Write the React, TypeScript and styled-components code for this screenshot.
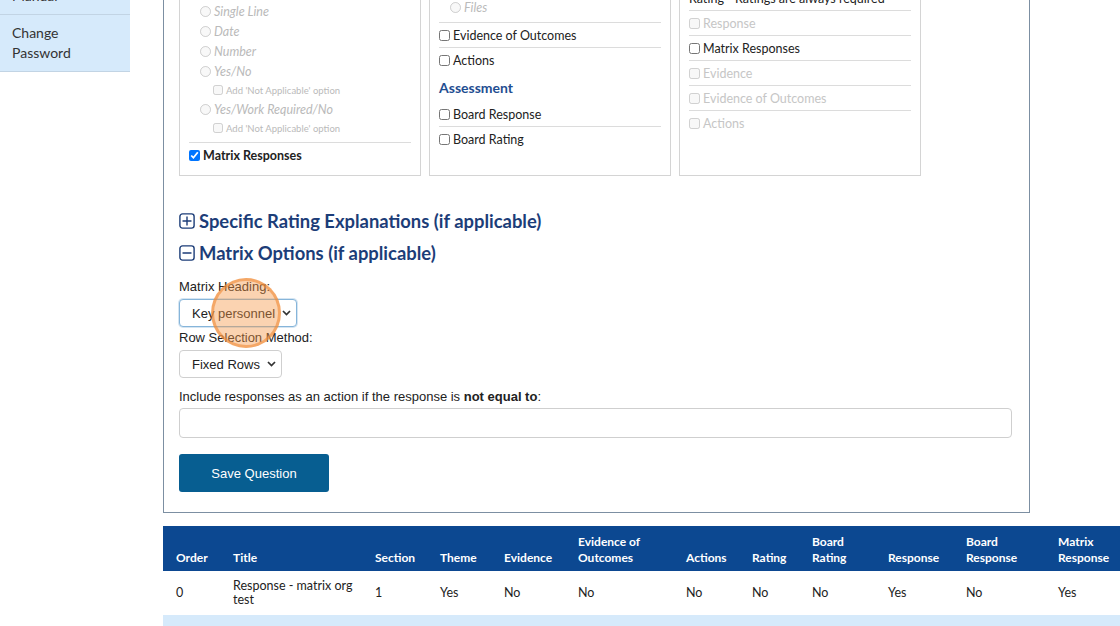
import React from 'react';
import styled, { createGlobalStyle } from 'styled-components';

const GlobalStyle = createGlobalStyle`
  * { box-sizing: border-box; }
  html, body { margin: 0; padding: 0; background: #ffffff; }
  body {
    font-family: Lato, "Noto Sans", sans-serif;
    color: #222;
    overflow: hidden;
  }
`;

const Viewport = styled.div`
  width: 1120px;
  height: 626px;
  overflow: hidden;
`;

/* the page is shown scrolled down by 100px */
const Scrolled = styled.div`
  display: flex;
  align-items: flex-start;
  margin-top: -100px;
`;

const Sidebar = styled.nav`
  width: 130px;
  flex: none;
  margin-top: 4px;
  display: flex;
  flex-direction: column;
`;

const NavLink = styled.a`
  display: block;
  background: #d6eafb;
  border-bottom: 1px solid #c2d4e4;
  padding: 8px 30px 8px 12px;
  font-size: 14px;
  line-height: 20px;
  color: #333;
  text-decoration: none;
`;

const Main = styled.main`
  flex: 1;
  min-width: 0;
  margin-top: 33px;
  padding-left: 33px;
  display: flex;
  flex-direction: column;
  gap: 13px;
`;

const QuestionPanel = styled.section`
  width: 867px;
  border: 1px solid #7c8fa2;
  padding: 15px 17px 20px 15px;
  display: flex;
  flex-direction: column;
`;

const OptionGrid = styled.div`
  display: grid;
  grid-template-columns: repeat(3, 242px);
  gap: 8px;
`;

const OptionPanel = styled.div`
  border: 1px solid #d4d4d4;
  padding: 6px 9px 8px;
  display: flex;
  flex-direction: column;
`;

const List = styled.div`
  display: flex;
  flex-direction: column;
  & > * {
    border-bottom: 1px solid #dcdcdc;
  }
  & > *:last-child {
    border-bottom: none;
  }
`;

const OptionBlock = styled.div<{ $pt: number }>`
  padding: ${(p) => p.$pt}px 0 5px;
`;

const CheckRow = styled.label<{ $muted?: boolean; $bold?: boolean; $h?: number }>`
  box-sizing: content-box;
  display: flex;
  align-items: center;
  gap: 3px;
  height: ${(p) => p.$h ?? 24}px;
  font-size: 12.5px;
  font-weight: ${(p) => (p.$bold ? 700 : 400)};
  color: ${(p) => (p.$muted ? '#c6c6c6' : '#222')};
  white-space: nowrap;
  input {
    width: 11px;
    height: 11px;
    margin: 0;
    flex: none;
  }
`;

const RadioList = styled.div`
  padding-left: 11px;
  display: flex;
  flex-direction: column;
`;

const RadioRow = styled.label`
  display: flex;
  align-items: center;
  gap: 3px;
  height: 20px;
  font-size: 12.5px;
  font-style: italic;
  color: #bababa;
  input {
    width: 11px;
    height: 11px;
    margin: 0;
  }
`;

const SubRow = styled.label`
  display: flex;
  align-items: center;
  gap: 3px;
  height: 18px;
  padding-left: 13px;
  font-size: 9.5px;
  color: #bababa;
  input {
    width: 10px;
    height: 10px;
    margin: 0;
  }
`;

const PanelHeading = styled.div`
  height: 30px;
  display: flex;
  align-items: center;
  font-size: 14px;
  font-weight: 700;
  color: #1f4e91;
`;

const Sections = styled.div`
  margin-top: 29px;
  display: flex;
  flex-direction: column;
`;

const SectionToggle = styled.div`
  display: flex;
  align-items: center;
  gap: 4px;
  height: 32px;
  font-size: 18.4px;
  font-weight: 700;
  color: #1c3d78;
`;

const Form = styled.div`
  margin-top: 10px;
  display: flex;
  flex-direction: column;
`;

const FieldLabel = styled.div<{ $mt?: number }>`
  margin-top: ${(p) => p.$mt ?? 0}px;
  font-family: "Liberation Sans", Arial, sans-serif;
  font-size: 13px;
  line-height: 16px;
  color: #222;
  b {
    font-weight: 700;
  }
`;

const SelectBox = styled.div<{ $focused?: boolean }>`
  position: relative;
  align-self: flex-start;
  display: inline-flex;
  align-items: center;
  gap: 7px;
  height: 28px;
  margin: 4px 0 3px;
  padding: 0 5px 0 12px;
  border: 1px solid ${(p) => (p.$focused ? '#86b5da' : '#cfcfcf')};
  border-radius: 4px;
  box-shadow: ${(p) => (p.$focused ? '0 0 0 1px rgba(134, 181, 218, 0.35)' : 'none')};
  background: #fff;
  font-family: "Liberation Sans", Arial, sans-serif;
  font-size: 13px;
  color: #222;
`;

const ClickMarker = styled.span`
  position: absolute;
  left: 31px;
  top: -22px;
  width: 70px;
  height: 70px;
  border-radius: 50%;
  background: rgba(246, 150, 70, 0.42);
  border: 3px solid rgba(240, 138, 55, 0.6);
  pointer-events: none;
`;

const TextInput = styled.input`
  display: block;
  width: 100%;
  height: 30px;
  margin: 3px 0 0;
  padding: 0 8px;
  border: 1px solid #cfcfcf;
  border-radius: 4px;
  font-family: "Liberation Sans", Arial, sans-serif;
  font-size: 13px;
`;

const SaveButton = styled.button`
  align-self: flex-start;
  margin-top: 16px;
  width: 150px;
  height: 38px;
  background: #075e91;
  color: #fff;
  border: none;
  border-radius: 3px;
  font-family: "Liberation Sans", Arial, sans-serif;
  font-size: 13px;
`;

const DataTable = styled.table`
  border-collapse: collapse;
  table-layout: fixed;
  width: 972px;
  flex: none;
`;

const Col = styled.col<{ $w: number }>`
  width: ${(p) => p.$w}px;
`;

const HeadCell = styled.th`
  background: #0c4891;
  color: #fff;
  font-size: 12px;
  font-weight: 700;
  text-align: left;
  vertical-align: bottom;
  padding: 8px 6px 5px 13px;
  line-height: 16px;
`;

const BodyRow = styled.tr<{ $alt?: boolean }>`
  height: 44px;
  background: ${(p) => (p.$alt ? '#d6eafb' : '#fff')};
`;

const Cell = styled.td`
  padding: 8px 6px 8px 13px;
  font-size: 12.5px;
  line-height: 14px;
  vertical-align: middle;
  color: #222;
`;

const ToggleIcon = ({ open }: { open: boolean }) => (
  <svg width="16" height="16" viewBox="0 0 16 16" fill="none" stroke="currentColor" strokeWidth="1.4">
    <rect x="0.9" y="0.9" width="14.2" height="14.2" rx="2.6" />
    <path d="M4 8h8" strokeLinecap="round" />
    {!open && <path d="M8 4v8" strokeLinecap="round" />}
  </svg>
);

const Chevron = () => (
  <svg width="9" height="6" viewBox="0 0 9 6" fill="none" stroke="#333" strokeWidth="1.7">
    <polyline points="1,1 4.5,4.6 8,1" />
  </svg>
);

const columns: [string, number][] = [
  ['Order', 57],
  ['Title', 142],
  ['Section', 65],
  ['Theme', 64],
  ['Evidence', 74],
  ['Evidence of Outcomes', 108],
  ['Actions', 66],
  ['Rating', 60],
  ['Board Rating', 76],
  ['Response', 78],
  ['Board Response', 92],
  ['Matrix Response', 90],
];

const rows = [
  ['0', 'Response - matrix org test', '1', 'Yes', 'No', 'No', 'No', 'No', 'No', 'Yes', 'No', 'Yes'],
  ['1', 'Key personnel', '1', 'Yes', 'Yes', 'No', 'Yes', 'Yes', 'No', 'Yes', 'No', 'No'],
];

export default function App() {
  return (
    <Viewport>
      <GlobalStyle />
      <Scrolled>
        <Sidebar>
          <NavLink href="#">Home</NavLink>
          <NavLink href="#">Questions</NavLink>
          <NavLink href="#">Manual</NavLink>
          <NavLink href="#">Change Password</NavLink>
        </Sidebar>

        <Main>
          <QuestionPanel>
            <OptionGrid>
              <OptionPanel>
                <List>
                  <OptionBlock $pt={5}>
                    <CheckRow $h={20} $muted>
                      <input type="checkbox" disabled />
                      Response
                    </CheckRow>
                    <RadioList>
                      <RadioRow><input type="radio" disabled />Multi Line</RadioRow>
                      <RadioRow><input type="radio" disabled />Single Line</RadioRow>
                      <RadioRow><input type="radio" disabled />Date</RadioRow>
                      <RadioRow><input type="radio" disabled />Number</RadioRow>
                      <RadioRow><input type="radio" disabled />Yes/No</RadioRow>
                      <SubRow><input type="checkbox" disabled />Add 'Not Applicable' option</SubRow>
                      <RadioRow><input type="radio" disabled />Yes/Work Required/No</RadioRow>
                      <SubRow><input type="checkbox" disabled />Add 'Not Applicable' option</SubRow>
                    </RadioList>
                  </OptionBlock>
                  <CheckRow $bold>
                    <input type="checkbox" defaultChecked />
                    Matrix Responses
                  </CheckRow>
                </List>
              </OptionPanel>

              <OptionPanel>
                <List>
                  <OptionBlock $pt={1}>
                    <CheckRow $h={20} $muted>
                      <input type="checkbox" disabled />
                      Evidence
                    </CheckRow>
                    <RadioList>
                      <RadioRow><input type="radio" disabled />Text</RadioRow>
                      <RadioRow><input type="radio" disabled />Files</RadioRow>
                    </RadioList>
                  </OptionBlock>
                  <CheckRow>
                    <input type="checkbox" />
                    Evidence of Outcomes
                  </CheckRow>
                  <CheckRow>
                    <input type="checkbox" />
                    Actions
                  </CheckRow>
                </List>
                <PanelHeading>Assessment</PanelHeading>
                <List>
                  <CheckRow>
                    <input type="checkbox" />
                    Board Response
                  </CheckRow>
                  <CheckRow>
                    <input type="checkbox" />
                    Board Rating
                  </CheckRow>
                </List>
              </OptionPanel>

              <OptionPanel>
                <PanelHeading>Board Review</PanelHeading>
                <List>
                  <CheckRow as="div">Rating - Ratings are always required</CheckRow>
                  <CheckRow $muted>
                    <input type="checkbox" disabled />
                    Response
                  </CheckRow>
                  <CheckRow>
                    <input type="checkbox" />
                    Matrix Responses
                  </CheckRow>
                  <CheckRow $muted>
                    <input type="checkbox" disabled />
                    Evidence
                  </CheckRow>
                  <CheckRow $muted>
                    <input type="checkbox" disabled />
                    Evidence of Outcomes
                  </CheckRow>
                  <CheckRow $muted>
                    <input type="checkbox" disabled />
                    Actions
                  </CheckRow>
                </List>
              </OptionPanel>
            </OptionGrid>

            <Sections>
              <SectionToggle>
                <ToggleIcon open={false} />
                Specific Rating Explanations (if applicable)
              </SectionToggle>
              <SectionToggle>
                <ToggleIcon open />
                Matrix Options (if applicable)
              </SectionToggle>
            </Sections>

            <Form>
              <FieldLabel>Matrix Heading:</FieldLabel>
              <SelectBox $focused>
                Key personnel
                <Chevron />
                <ClickMarker />
              </SelectBox>
              <FieldLabel>Row Selection Method:</FieldLabel>
              <SelectBox>
                Fixed Rows
                <Chevron />
              </SelectBox>
              <FieldLabel $mt={8}>
                Include responses as an action if the response is <b>not equal to</b>:
              </FieldLabel>
              <TextInput type="text" />
              <SaveButton type="button">Save Question</SaveButton>
            </Form>
          </QuestionPanel>

          <DataTable>
            <colgroup>
              {columns.map(([name, w]) => (
                <Col key={name} $w={w} />
              ))}
            </colgroup>
            <thead>
              <tr>
                {columns.map(([name]) => (
                  <HeadCell key={name}>{name}</HeadCell>
                ))}
              </tr>
            </thead>
            <tbody>
              {rows.map((r, i) => (
                <BodyRow key={i} $alt={i % 2 === 1}>
                  {r.map((v, j) => (
                    <Cell key={j}>{v}</Cell>
                  ))}
                </BodyRow>
              ))}
            </tbody>
          </DataTable>
        </Main>
      </Scrolled>
    </Viewport>
  );
}
